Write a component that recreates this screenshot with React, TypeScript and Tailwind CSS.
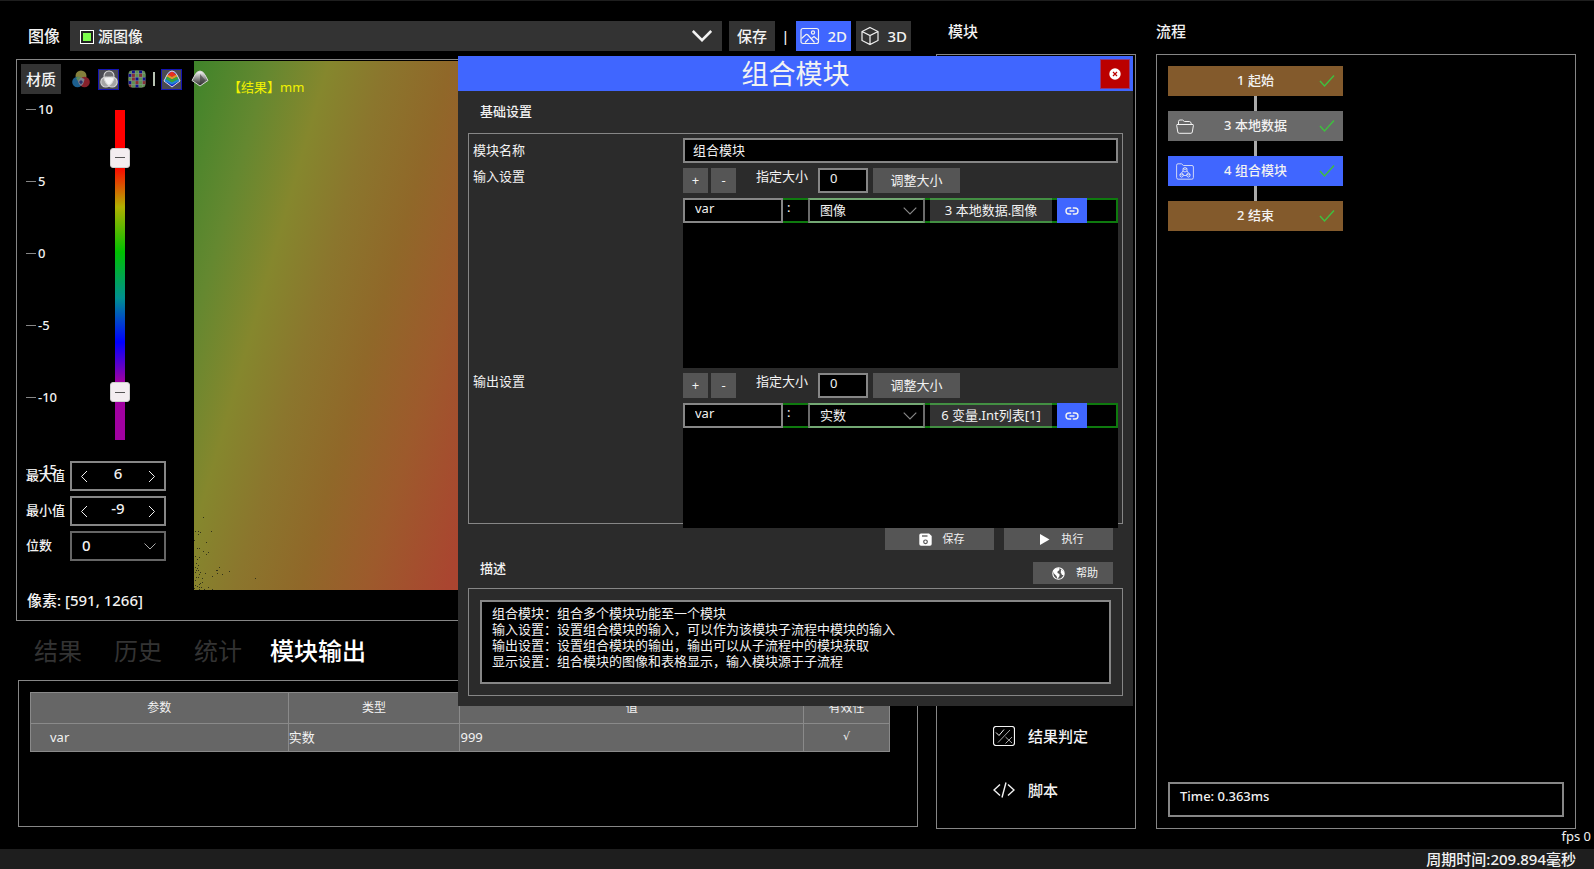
import { useState } from 'react';
import type { ReactNode } from 'react';

interface IconProps {
  className?: string;
}

interface FlowNode {
  id: number;
  name: string;
  color: string;
  icon?: ReactNode;
}

interface VarSectionProps {
  id: string;
  title: string;
  type: string;
  types: string[];
  source: string;
  listClass: string;
}

const TICKS = ['10', '5', '0', '-5', '-10', '-15'];

const TABS = ['结果', '历史', '统计', '模块输出'];

// Invalid pixels in the depth map, measured from its bottom-left corner
const HOLES = [
  [9, 72], [1, 58], [4, 58], [6, 57], [17, 58], [4, 55], [0, 49], [12, 47], [3, 41], [5, 41],
  [9, 38], [14, 37], [12, 35], [1, 33], [5, 32], [3, 30], [2, 26], [1, 22], [4, 24], [3, 21],
  [25, 22], [23, 19], [35, 18], [22, 19], [1, 17], [4, 19], [6, 17], [11, 16], [5, 15], [28, 15],
  [18, 13], [2, 12], [4, 12], [61, 11], [1, 9], [8, 11], [6, 6], [8, 7], [5, 5], [3, 3],
  [14, 2], [18, 0], [5, 2], [5, 0], [7, 2], [10, 0], [1, 4], [0, 1], [23, 16], [2, 19],
];

const DESCRIPTION = [
  '组合模块：组合多个模块功能至一个模块',
  '输入设置：设置组合模块的输入，可以作为该模块子流程中模块的输入',
  '输出设置：设置组合模块的输出，输出可以从子流程中的模块获取',
  '显示设置：组合模块的图像和表格显示，输入模块源于子流程',
].join('\n');

function Chevron({ className }: IconProps) {
  return (
    <svg viewBox="0 0 12 7" className={className} fill="none" stroke="currentColor" aria-hidden="true">
      <path d="M0.5 0.5 L6 6 L11.5 0.5" />
    </svg>
  );
}

function CheckIcon() {
  return (
    <svg viewBox="0 0 16 14" className="h-3.5 w-4 justify-self-end" fill="none" stroke="#3fbf3f" strokeWidth="1.5" aria-hidden="true">
      <path d="M1 7 L5.5 12 L15 1.5" />
    </svg>
  );
}

function PictureIcon() {
  return (
    <svg viewBox="0 0 20 18" className="h-[18px] w-5" fill="none" stroke="currentColor" strokeWidth="1.2" aria-hidden="true">
      <rect x="1" y="1.5" width="17.5" height="15" rx="2" />
      <circle cx="13" cy="5.5" r="1.6" />
      <path d="M1.5 11.5 L6 7.5 Q7 7 8 8 L14.5 15.5 M5 15.5 L8.5 12 M11.5 11.5 L14 9.5 L18 13" />
    </svg>
  );
}

function CubeIcon() {
  return (
    <svg viewBox="0 0 20 20" className="size-5" fill="none" stroke="currentColor" strokeWidth="1.2" aria-hidden="true">
      <path d="M10 1.5 L18 5.5 V14.5 L10 18.5 L2 14.5 V5.5 Z M2 5.5 L10 9.5 L18 5.5 M10 9.5 V18.5" />
    </svg>
  );
}

function RgbCirclesIcon() {
  return (
    <svg viewBox="0 0 18 18" className="size-[18px]" aria-hidden="true">
      <circle cx="9" cy="6" r="5.5" fill="#85803c" />
      <circle cx="5.5" cy="12" r="5.3" fill="#1c5f8f" />
      <circle cx="12.5" cy="12" r="5.3" fill="#86202a" />
      <path d="M9 7.5 L12.5 9 Q12 14 9 16 Q6 14 5.5 9 Z" fill="#7c7f8c" />
      <path d="M9 10 L11 12 L9 14.5 L7 12 Z" fill="#2a2f6c" />
      <path d="M4 8 Q6 6 9 7 L6 11 Z" fill="#5d8a5a" />
    </svg>
  );
}

function GrayCirclesIcon() {
  return (
    <svg viewBox="0 0 18 18" className="size-[18px]" stroke="#d8d8d8" strokeWidth="1.1" aria-hidden="true">
      <circle cx="9" cy="6" r="5" fill="#6d6d70" />
      <circle cx="5.8" cy="12" r="5" fill="#a5a5a5" />
      <circle cx="12.2" cy="12" r="5" fill="#a5a5a5" />
      <path d="M4 8 Q9 6 14 8 Q13 13 9 15.5 Q5 13 4 8 Z" fill="#f2f2f2" />
    </svg>
  );
}

function MosaicIcon() {
  const rows = ['gbgbg', 'brgrg', 'grbgb', 'bgrgr', 'rgbgg'];
  const fills: Record<string, string> = { g: '#5f9150', b: '#12128c', r: '#862f36' };
  return (
    <svg viewBox="0 0 18 18" className="size-[18px]" aria-hidden="true">
      <clipPath id="mosaic-clip">
        <rect x="0.5" y="0.5" width="17" height="17" rx="4" />
      </clipPath>
      <g clipPath="url(#mosaic-clip)">
        <rect width="18" height="18" fill="#86968a" />
        {rows.map((row, y) =>
          row.split('').map((c, x) => (
            <rect key={`${x}-${y}`} x={x * 3.6 + 0.3} y={y * 3.6 + 0.3} width="3" height="3" fill={fills[c]} />
          ))
        )}
      </g>
    </svg>
  );
}

function ColorSurfaceIcon() {
  return (
    <svg viewBox="0 0 18 18" className="size-[18px]" aria-hidden="true">
      <path d="M9 1 Q12.5 1.5 14 5 L17 11 L9 17 L1 11 L4 5 Q5.5 1.5 9 1 Z" fill="#1c2fd0" />
      <path d="M9 1 L13.5 5 L9 7 L4.5 5 Z" fill="#e8301e" />
      <path d="M4.5 4.5 L9 7 V9.5 L3.5 6.500 Z M13.5 4.5 L9 7 V9.5 L14.5 6.500 Z" fill="#e09a20" />
      <path d="M3.500 6.500 L9 9.500 V12.500 L2.200 9 Z M14.500 6.500 L9 9.500 V12.500 L15.800 9 Z" fill="#35a83a" />
      <path d="M2.200 9 L9 12.500 V14.500 L1.200 10.800 Z M15.800 9 L9 12.500 V14.500 L16.800 10.800 Z" fill="#1f90d0" />
      <path d="M9 1 Q12.5 1.5 14 5 L17 11 L9 17 L1 11 L4 5 Q5.5 1.5 9 1 Z" fill="none" stroke="#dcdcec" strokeWidth="1" />
    </svg>
  );
}

function GraySurfaceIcon() {
  return (
    <svg viewBox="0 0 18 18" className="size-[18px]" aria-hidden="true">
      <linearGradient id="gray-surface" x1="0" y1="0" x2="0" y2="1">
        <stop offset="0" stopColor="#ffffff" />
        <stop offset="0.45" stopColor="#9a9a9a" />
        <stop offset="1" stopColor="#222222" />
      </linearGradient>
      <path d="M9 1 Q12.5 1.5 14 5 L17 10.5 L9 16 L1 10.5 L4 5 Q5.5 1.5 9 1 Z" fill="url(#gray-surface)" stroke="#d8d8d8" strokeWidth="1" />
      <path d="M9 4 V15 L14.5 10.5 Z" fill="#3a3a3a" opacity="0.6" />
    </svg>
  );
}

function FolderIcon() {
  return (
    <svg viewBox="0 0 18 15" className="h-[15px] w-[18px]" fill="none" stroke="currentColor" strokeWidth="1" aria-hidden="true">
      <path d="M2.5 5 V2.5 Q2.5 1 4 1 H6.5 L8.5 2.5 H13.5 Q15 2.5 15.3 5" />
      <path d="M1 5.5 H17 Q17.5 5.5 17.4 6.5 L16.3 13 Q16 14.3 15 14.3 H3.2 Q2 14.3 1.8 13 L0.7 6.5 Q0.6 5.5 1 5.5 Z" />
    </svg>
  );
}

function GroupFolderIcon() {
  return (
    <svg viewBox="0 0 18 17" className="h-[17px] w-[18px]" fill="none" stroke="currentColor" strokeWidth="0.8" aria-hidden="true">
      <path d="M2 0.8 H5.5 L7.5 2.5 H16 Q17.4 2.5 17.4 4 V14.5 Q17.4 16.2 15.8 16.2 H2.2 Q0.6 16.2 0.6 14.5 V2.2 Q0.6 0.8 2 0.8 Z" />
      <path d="M7 5.5 L9 4.5 L11 5.5 V8 L9 9 L7 8 Z M7 5.5 L9 6.5 L11 5.5" />
      <path d="M4 11 L5.5 10.3 L7.2 11 V13.2 L5.5 14.2 L4 13.2 Z M4 11 L5.5 12 L7.2 11" />
      <path d="M10.8 11 L12.5 10.3 L14 11 V13.2 L12.5 14.2 L10.8 13.2 Z M10.8 11 L12.5 12 L14 11" />
      <path d="M7 8 L5.5 10 M11 8 L12.5 10 M7.5 12.5 H10.5" />
    </svg>
  );
}

function JudgeIcon() {
  return (
    <svg viewBox="0 0 22 20" className="h-5 w-[22px]" fill="none" stroke="currentColor" strokeWidth="1" aria-hidden="true">
      <rect x="0.5" y="0.5" width="21" height="19" rx="2.5" strokeWidth="1.2" />
      <path d="M3 6.5 L6 9.5 L11 3.5" />
      <path d="M17 4 L5 16.5 M12.5 11 L19 17 M19 11 L12.5 17.5" stroke="#a8a8a8" />
    </svg>
  );
}

function CodeIcon() {
  return (
    <svg viewBox="0 0 22 16" className="h-4 w-[22px]" fill="none" stroke="currentColor" strokeWidth="1.4" aria-hidden="true">
      <path d="M7 2.5 L1 8 L7 13.5 M15 2.5 L21 8 L15 13.5 M13 0.5 L9 15.5" />
    </svg>
  );
}

function LinkIcon() {
  return (
    <svg viewBox="0 0 14 8" className="h-2 w-3.5" fill="none" stroke="currentColor" strokeWidth="1.4" aria-hidden="true">
      <path d="M6.2 1 H4 A3 3 0 0 0 4 7 H6.2 M7.8 1 H10 A3 3 0 0 1 10 7 H7.8 M4.5 4 H9.5" />
    </svg>
  );
}

function SaveIcon() {
  return (
    <svg viewBox="0 0 13 13" className="size-[13px]" aria-hidden="true">
      <path d="M2 0.5 H10 L12.7 3 V11 Q12.7 12.7 11 12.7 H2 Q0.3 12.7 0.3 11 V2 Q0.3 0.5 2 0.5 Z" fill="#fff" />
      <path d="M3 3 H8.5" stroke="#555" strokeWidth="1.3" />
      <circle cx="6.5" cy="8.8" r="1.8" fill="none" stroke="#555" strokeWidth="1.2" />
    </svg>
  );
}

function PlayIcon() {
  return (
    <svg viewBox="0 0 13 13" className="size-[13px]" fill="#fff" aria-hidden="true">
      <path d="M2 1 L11.5 6.5 L2 12 Z" />
    </svg>
  );
}

function GlobeIcon() {
  return (
    <svg viewBox="0 0 13 13" className="size-[13px]" aria-hidden="true">
      <circle cx="6.5" cy="6.5" r="5.7" fill="#555" stroke="#fff" strokeWidth="1.1" />
      <path d="M1 4 Q3 1 7 1 L7.5 3 L5.5 4.5 L5.5 6 L7.5 7 L7.5 9 L5.5 12 L4.5 9 L2 6.5 Z" fill="#fff" />
      <path d="M9 2 L12 5 L12 8 L10 8 L8.8 5.5 Z" fill="#fff" />
    </svg>
  );
}

function CloseIcon() {
  return (
    <svg viewBox="0 0 12 12" className="size-3" aria-hidden="true">
      <circle cx="6" cy="6" r="5.7" fill="#fff" />
      <path d="M4 4 L8 8 M8 4 L4 8" stroke="#bb0000" strokeWidth="1.2" />
    </svg>
  );
}

function NumberBox({ id, label, initial }: { id: string; label: string; initial: number }) {
  const [value, setValue] = useState(initial);
  return (
    <div className="flex h-[30px] items-center">
      <label htmlFor={id} className="w-11 text-[13px]">{label}</label>
      <div className="flex h-full w-24 border-2 border-[#868686] bg-black">
        <button type="button" aria-label={`${label}减`} className="flex w-6 items-center justify-center" onClick={() => setValue(value - 1)}>
          <Chevron className="h-[7px] w-3 rotate-90" />
        </button>
        <input
          id={id}
          className="w-full min-w-0 flex-1 bg-transparent pb-1.5 text-center text-[15px] outline-none"
          value={value}
          onChange={(e) => setValue(Number(e.target.value) || 0)}
        />
        <button type="button" aria-label={`${label}加`} className="flex w-6 items-center justify-center" onClick={() => setValue(value + 1)}>
          <Chevron className="h-[7px] w-3 -rotate-90" />
        </button>
      </div>
    </div>
  );
}

function RangeThumb({ label, value }: { label: string; value: number }) {
  return (
    <input
      type="range"
      aria-label={label}
      min={-11.4}
      max={8.4}
      step={0.1}
      defaultValue={value}
      className="pointer-events-none absolute inset-0 m-0 h-full w-5 appearance-none bg-transparent [direction:rtl] [writing-mode:vertical-lr] [&::-webkit-slider-thumb]:pointer-events-auto [&::-webkit-slider-thumb]:size-5 [&::-webkit-slider-thumb]:appearance-none [&::-webkit-slider-thumb]:rounded-[3px] [&::-webkit-slider-thumb]:border [&::-webkit-slider-thumb]:border-[#d0d0d0] [&::-webkit-slider-thumb]:bg-[#f3edf0] [&::-webkit-slider-thumb]:bg-[linear-gradient(#555,#555)] [&::-webkit-slider-thumb]:bg-[length:10px_1px] [&::-webkit-slider-thumb]:bg-center [&::-webkit-slider-thumb]:bg-no-repeat"
    />
  );
}

function TopBar() {
  const [mode, setMode] = useState('2D');
  return (
    <div className="flex items-center pt-5 text-[15px]">
      <label htmlFor="image-source" className="w-[54px] pl-3 text-base">图像</label>
      <div className="relative h-[30px] flex-1">
        <select id="image-source" className="h-full w-full appearance-none bg-[#333] pl-7 outline-none">
          <option>源图像</option>
        </select>
        <span className="pointer-events-none absolute top-[9px] left-2.5 size-3.5 border border-white bg-[#7cfc4c] p-0.5 shadow-[inset_0_0_0_2px_#222]" />
        <Chevron className="pointer-events-none absolute top-[9px] right-2.5 h-3 w-5 stroke-[1.5]" />
      </div>
      <button type="button" className="ml-[7px] h-[30px] w-[46px] bg-[#333]">保存</button>
      <span className="w-[21px] text-center">|</span>
      <button
        type="button"
        className={`flex h-[30px] w-[55px] items-center justify-between px-1 ${mode === '2D' ? 'bg-[#4066ff]' : 'bg-[#333]'}`}
        onClick={() => setMode('2D')}
      >
        <PictureIcon />
        2D
      </button>
      <button
        type="button"
        className={`mr-[7px] ml-[5px] flex h-[30px] w-[55px] items-center justify-between px-1 ${mode === '3D' ? 'bg-[#4066ff]' : 'bg-[#333]'}`}
        onClick={() => setMode('3D')}
      >
        <CubeIcon />
        3D
      </button>
    </div>
  );
}

function DepthMap() {
  return (
    <div className="relative mt-px flex-1 overflow-hidden bg-[linear-gradient(106deg,#3f842a_0px,#648830_72px,#85872d_130px,#8b762d_185px,#906829_247px,#9d5a2c_312px,#aa4530_389px,#ad4030_480px)]">
      <p className="mt-4 ml-[34px] text-[13px] leading-5 font-normal text-[#f2f200]">【结果】mm</p>
      <svg className="absolute bottom-0 left-0 h-20 w-20" viewBox="0 0 80 80" fill="#33331a" aria-hidden="true">
        {HOLES.map(([x, y], i) => (
          <rect key={i} x={x} y={79 - y} width="1" height="1" />
        ))}
      </svg>
    </div>
  );
}

function ImagePanel() {
  return (
    <section className="mt-2 flex min-h-[560px] flex-1 flex-col border border-[#868686]">
      <div className="flex flex-1">
        <div className="w-[177px] shrink-0">
          <div className="relative z-10 flex w-max items-center pt-1 pl-1">
            <button type="button" className="mr-[9px] h-[30px] w-10 bg-[#333] text-[15px]">材质</button>
            <div className="flex gap-[7px]">
              <button type="button" aria-label="彩色" className="flex size-[21px] items-center justify-center"><RgbCirclesIcon /></button>
              <button type="button" aria-label="灰度" className="flex size-[21px] items-center justify-center border border-[#1414b4] bg-[#4a4a52]"><GrayCirclesIcon /></button>
              <button type="button" aria-label="马赛克" className="flex size-[21px] items-center justify-center"><MosaicIcon /></button>
            </div>
            <span className="flex w-3.5 justify-center">
              <span className="h-3.5 w-0.5 bg-[#b9c4b4]" />
            </span>
            <div className="flex gap-[7px]">
              <button type="button" aria-label="彩色曲面" className="flex size-[21px] items-center justify-center border border-[#1414b4] bg-[#4a4a52]"><ColorSurfaceIcon /></button>
              <button type="button" aria-label="灰度曲面" className="flex size-[21px] items-center justify-center"><GraySurfaceIcon /></button>
            </div>
          </div>

          {/* Height scale, last tick runs below the bar */}
          <div className="flex h-[367px] pt-[5px] pl-[9px]">
            <ul className="w-[84px]">
              {TICKS.map((tick) => (
                <li key={tick} className="flex h-[72px] items-start text-[13px] leading-5">
                  <span className="mt-2.5 mr-0.5 h-px w-2.5 bg-[#868686]" />
                  {tick}
                </li>
              ))}
            </ul>
            <div className="relative mt-[11px] h-[330px] w-5">
              <div className="mx-auto h-full w-2.5 bg-[linear-gradient(#f00_0px,#f00_56px,#b0b000_97px,#00c000_142px,#009090_188px,#00f_232px,#a000a0_272px,#a000a0_330px)]" />
              <RangeThumb label="上限" value={6} />
              <RangeThumb label="下限" value={-9} />
            </div>
          </div>

          <div className="relative flex flex-col gap-[5px] pl-[9px]">
            <NumberBox id="max-value" label="最大值" initial={6} />
            <NumberBox id="min-value" label="最小值" initial={-9} />
            <div className="flex h-[30px] items-center">
              <label htmlFor="digits" className="w-11 text-[13px]">位数</label>
              <div className="relative h-full w-24">
                <select id="digits" className="h-full w-full appearance-none border-2 border-[#666] bg-black pb-0.5 pl-2.5 text-[15px] outline-none">
                  <option>0</option>
                </select>
                <Chevron className="pointer-events-none absolute top-3 right-2.5 h-[7px] w-3 text-[#aaa]" />
              </div>
            </div>
          </div>
        </div>
        <DepthMap />
      </div>
      <p className="h-[30px] pl-2.5 text-[15px] leading-5">像素: [591, 1266]</p>
    </section>
  );
}

function OutputPanel() {
  const [tab, setTab] = useState('模块输出');
  return (
    <>
      <div className="flex h-[59px] items-center pl-0.5 text-2xl">
        {TABS.map((name) => (
          <button
            key={name}
            type="button"
            className={`${name.length > 2 ? 'w-[120px]' : 'w-20'} ${name === tab ? 'font-medium text-white' : 'font-normal text-[#333]'}`}
            onClick={() => setTab(name)}
          >
            {name}
          </button>
        ))}
      </div>
      <section className="ml-0.5 h-[147px] border border-[#868686] pt-[11px] pr-[27px] pl-[11px]">
        <table className="w-full table-fixed border-collapse bg-[#666] text-[13px] font-normal">
          <thead>
            <tr className="h-[31px] text-[12px]">
              <th className="w-[30%] border border-[#8a8a8a] font-normal">参数</th>
              <th className="w-[20%] border border-[#8a8a8a] font-normal">类型</th>
              <th className="w-[40%] border border-[#8a8a8a] font-normal">值</th>
              <th className="w-[10%] border border-[#8a8a8a] font-normal">有效性</th>
            </tr>
          </thead>
          <tbody>
            <tr className="h-7">
              <td className="border border-[#8a8a8a] pl-[19px]">var</td>
              <td className="border border-[#8a8a8a]">实数</td>
              <td className="border border-[#8a8a8a]">999</td>
              <td className="border border-[#8a8a8a] text-center font-['DejaVu_Sans'] text-[11px]">√</td>
            </tr>
          </tbody>
        </table>
      </section>
    </>
  );
}

function ModulePanel() {
  return (
    <div className="flex w-[200px] shrink-0 flex-col text-[15px]">
      <h2 className="h-[53px] pt-5 pl-3 leading-5">模块</h2>
      <div className="flex flex-1 flex-col justify-end border border-[#868686] pb-[11px] pl-14">
        <button type="button" className="flex h-[54px] items-center gap-[13px]"><JudgeIcon />结果判定</button>
        <button type="button" className="flex h-[54px] items-center gap-[13px]"><CodeIcon />脚本</button>
      </div>
    </div>
  );
}

function FlowPanel() {
  const nodes: FlowNode[] = [
    { id: 1, name: '起始', color: 'bg-[#835a2c]' },
    { id: 3, name: '本地数据', color: 'bg-[#696969]', icon: <FolderIcon /> },
    { id: 4, name: '组合模块', color: 'bg-[#4066ff]', icon: <GroupFolderIcon /> },
    { id: 2, name: '结束', color: 'bg-[#835a2c]' },
  ];
  return (
    <div className="flex w-[420px] shrink-0 flex-col">
      <h2 className="h-[53px] pt-5 text-[15px] leading-5">流程</h2>
      <div className="flex flex-1 flex-col justify-between border border-[#868686] p-[11px]">
        <ol className="w-[175px] text-[13px]">
          {nodes.map((node, i) => (
            <li key={node.id}>
              {i > 0 && <div className="mx-auto h-[15px] w-[3px] bg-[#aaa]" />}
              <button type="button" className={`grid h-[30px] w-full grid-cols-[20px_1fr_20px] items-center px-2 ${node.color}`}>
                <span>{node.icon}</span>
                <span>{node.id} {node.name}</span>
                <CheckIcon />
              </button>
            </li>
          ))}
        </ol>
        <output className="block h-[35px] border-2 border-[#868686] px-2.5 text-[13px] leading-6">Time: 0.363ms</output>
      </div>
    </div>
  );
}

function VarSection({ id, title, type, types, source, listClass }: VarSectionProps) {
  return (
    <>
      <h3 className="leading-4">{title}</h3>
      <div>
        <div className="flex h-[25px]">
          <button type="button" aria-label="添加" className="w-[25px] bg-[#555]">+</button>
          <button type="button" aria-label="删除" className="ml-[3px] w-[25px] bg-[#555]">-</button>
          <label htmlFor={`${id}-size`} className="ml-5 w-[62px] leading-4">指定大小</label>
          <input id={`${id}-size`} defaultValue="0" className="w-[50px] border-2 border-[#868686] bg-black pb-1 pl-2.5 outline-none" />
          <button type="button" className="ml-[5px] w-[87px] bg-[#555]">调整大小</button>
        </div>
        <div className={`mt-[5px] bg-black ${listClass}`}>
          <div className="flex h-[25px] shadow-[inset_0_0_0_2px_#0e7a0e]">
            <input aria-label={`${title}变量名`} defaultValue="var" className="w-[100px] border-2 border-[#868686] bg-black pb-1 pl-2.5 outline-none" />
            <span className="w-[25px] pl-1 leading-[18px]">:</span>
            <div className="relative w-[117px]">
              <select
                aria-label={`${title}类型`}
                defaultValue={type}
                className="h-full w-full appearance-none border-2 border-x-[#6b6b6b] border-y-[#73a873] bg-black pl-2.5 outline-none"
              >
                {types.map((t) => (
                  <option key={t}>{t}</option>
                ))}
              </select>
              <Chevron className="pointer-events-none absolute top-[9px] right-2 h-2 w-3.5 text-[#888]" />
            </div>
            <button type="button" className="ml-[5px] w-[122px] border-y-2 border-[#438f43] bg-[#333]">{source}</button>
            <button type="button" aria-label="链接" className="ml-[5px] flex w-[30px] items-center justify-center bg-[#4066ff]"><LinkIcon /></button>
          </div>
        </div>
      </div>
    </>
  );
}

function ModuleDialog() {
  return (
    <div role="dialog" aria-labelledby="dialog-title" className="absolute top-[55px] left-[458px] z-20 w-[675px] bg-[#2b2b2b] pb-2.5 text-[13px] font-normal">
      <header className="relative flex h-[35px] items-center justify-center bg-[#4066ff]">
        <h1 id="dialog-title" className="text-[27px] leading-[35px]">组合模块</h1>
        <button type="button" aria-label="关闭" className="absolute top-[3px] right-[3px] flex size-[30px] items-center justify-center border border-[#8a3a80] bg-[#bb0000]">
          <CloseIcon />
        </button>
      </header>

      <h2 className="flex h-[42px] items-center pl-[22px] font-medium">基础设置</h2>
      <div className="mx-2.5 grid grid-cols-[210px_1fr] gap-y-[5px] border border-[#868686] px-1 pt-1">
        <label htmlFor="module-name" className="leading-[25px]">模块名称</label>
        <input id="module-name" defaultValue="组合模块" className="h-[25px] border-2 border-[#868686] bg-black pb-0.5 pl-2 outline-none" />
        <VarSection id="input" title="输入设置" type="图像" types={['图像', '实数']} source="3 本地数据.图像" listClass="h-[170px]" />
        <VarSection id="output" title="输出设置" type="实数" types={['图像', '实数']} source="6 变量.Int列表[1]" listClass="-mb-[5px] h-[125px]" />
      </div>

      <div className="mt-1 flex justify-end gap-2.5 pr-5 text-[11px]">
        <button type="button" className="flex h-[22px] w-[109px] items-center justify-center gap-[11px] bg-[#555] pl-1"><SaveIcon />保存</button>
        <button type="button" className="flex h-[22px] w-[109px] items-center justify-center gap-[11px] bg-[#555] pl-1"><PlayIcon />执行</button>
      </div>

      <div className="flex h-[38px] items-center justify-between pr-5 pl-[22px]">
        <label htmlFor="description" className="font-medium">描述</label>
        <button type="button" className="mt-2 flex h-[22px] w-20 items-center justify-center gap-[11px] bg-[#555] pl-1 text-[11px]"><GlobeIcon />帮助</button>
      </div>
      <div className="mx-2.5 border border-[#868686] p-[11px]">
        <textarea
          id="description"
          readOnly
          value={DESCRIPTION}
          className="block h-[84px] w-full resize-none border-2 border-[#868686] bg-black px-2.5 pt-[3px] leading-4 outline-none"
        />
      </div>
    </div>
  );
}

export default function App() {
  return (
    <div className="relative flex min-h-screen flex-col border-t border-[#1e1e1e] bg-black font-['Noto_Sans','Noto_Sans_CJK_SC',sans-serif] font-medium text-[#f2f2f2]">
      <main className="flex flex-1 pr-[18px] pl-4">
        <div className="flex min-w-0 flex-1 flex-col pb-0.5">
          <TopBar />
          <ImagePanel />
          <OutputPanel />
        </div>
        <div className="ml-[18px] flex gap-5">
          <ModulePanel />
          <FlowPanel />
        </div>
      </main>
      <p className="h-5 pr-[3px] text-right text-[13px] leading-[14px] font-normal">fps 0</p>
      <footer className="h-5 bg-[#1e1e1e] pr-[18px] text-right text-[15px] leading-5">周期时间:209.894毫秒</footer>
      <ModuleDialog />
    </div>
  );
}
